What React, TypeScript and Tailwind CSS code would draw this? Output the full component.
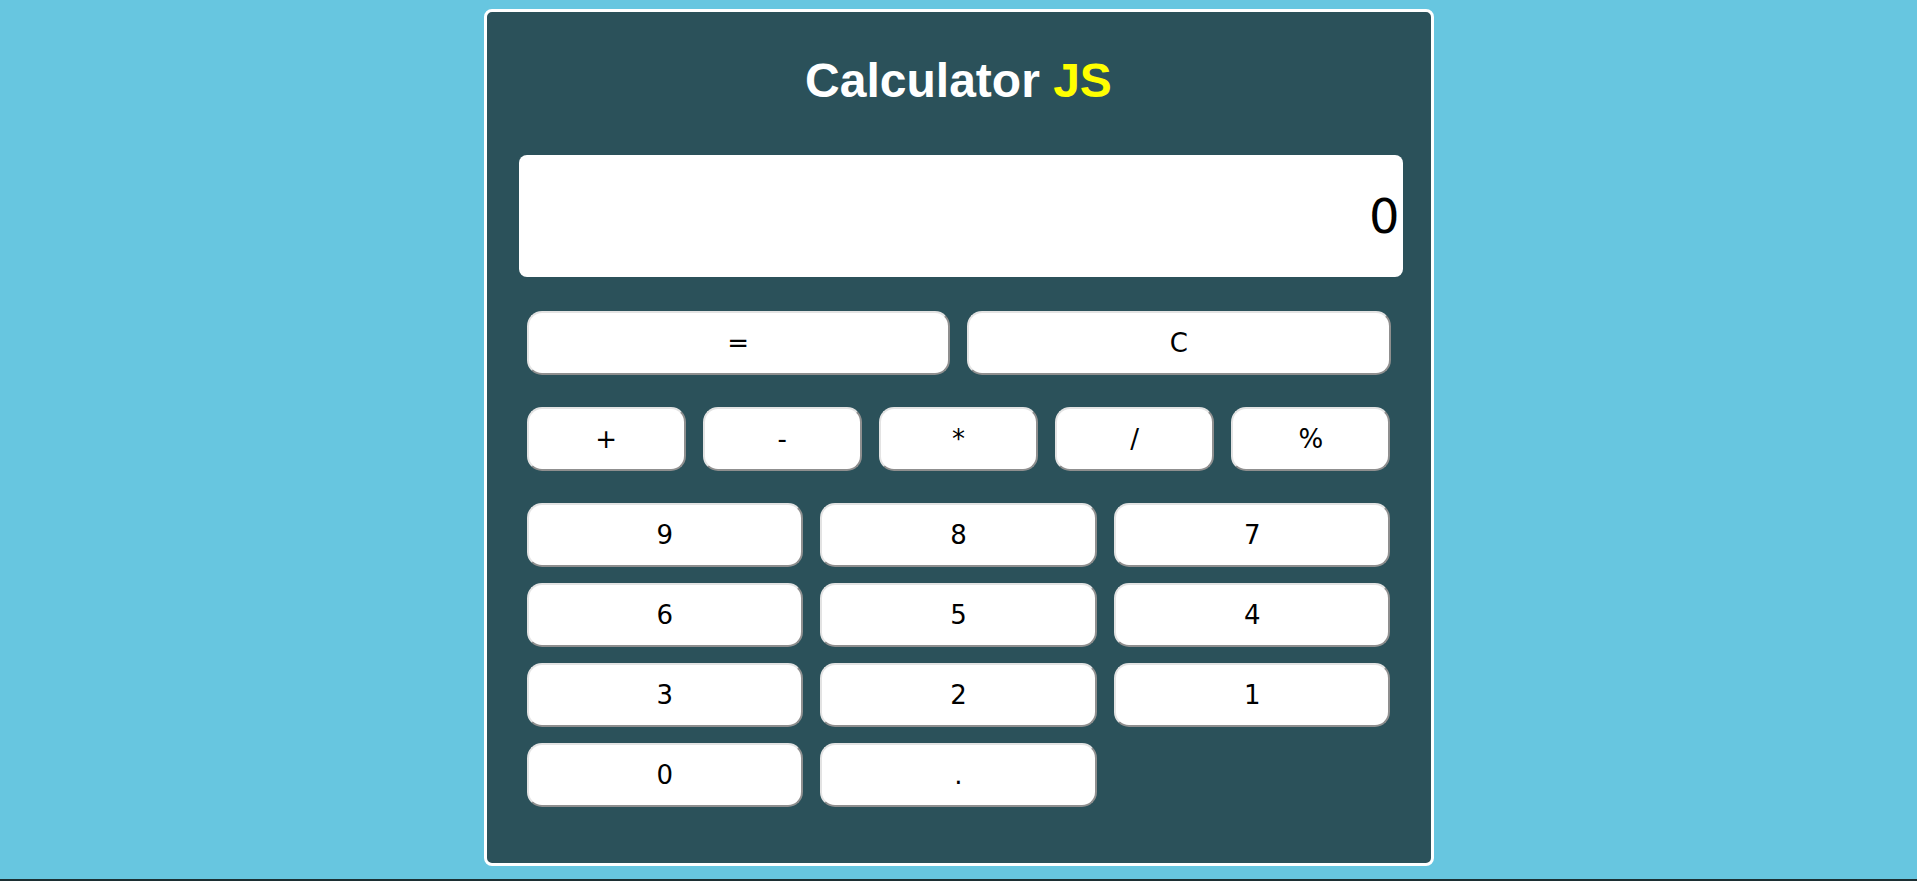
const ops = ['+', '-', '*', '/', '%'];
const digits = ['9', '8', '7', '6', '5', '4', '3', '2', '1', '0', '.'];

function Key({ label }: { label: string }) {
  return (
    <button
      type="button"
      className="h-[64px] rounded-[15px] bg-white border-2 border-t-[#e3e3e3] border-l-[#e3e3e3] border-r-[#8f8f8f] border-b-[#8f8f8f] text-[26px] leading-none text-black font-['DejaVu_Sans',sans-serif]"
    >
      {label}
    </button>
  );
}

export default function App() {
  return (
    <div className="h-screen bg-[#1c2f33] overflow-hidden">
      <div className="h-[879px] bg-[#67c6e0] flex justify-center pt-[9px]">
        <div className="w-[950px] h-[857px] bg-[#2b515a] border-[3px] border-white rounded-[8px] flex flex-col">
          <h1 className="mt-[45px] text-center text-[48px] leading-[48px] font-bold text-white font-['Liberation_Sans',Arial,sans-serif]">
            Calculator <span className="text-[#ffff00]">JS</span>
          </h1>

          {/* display */}
          <div className="mt-[50px] ml-[32px] w-[884px] h-[122px] bg-white rounded-[8px] flex items-center justify-end pr-[3px]">
            <span className="text-[48px] leading-none text-black font-['DejaVu_Sans',sans-serif]">0</span>
          </div>

          <div className="mt-[34px] ml-[40px] w-[864px] flex flex-col">
            <div className="grid grid-cols-2 gap-[17px]">
              <Key label="=" />
              <Key label="C" />
            </div>
            <div className="mt-[32px] grid grid-cols-5 gap-[17px]">
              {ops.map((o) => (
                <Key key={o} label={o} />
              ))}
            </div>
            <div className="mt-[32px] grid grid-cols-3 gap-x-[17px] gap-y-[16px]">
              {digits.map((d) => (
                <Key key={d} label={d} />
              ))}
            </div>
          </div>
        </div>
      </div>
    </div>
  );
}
